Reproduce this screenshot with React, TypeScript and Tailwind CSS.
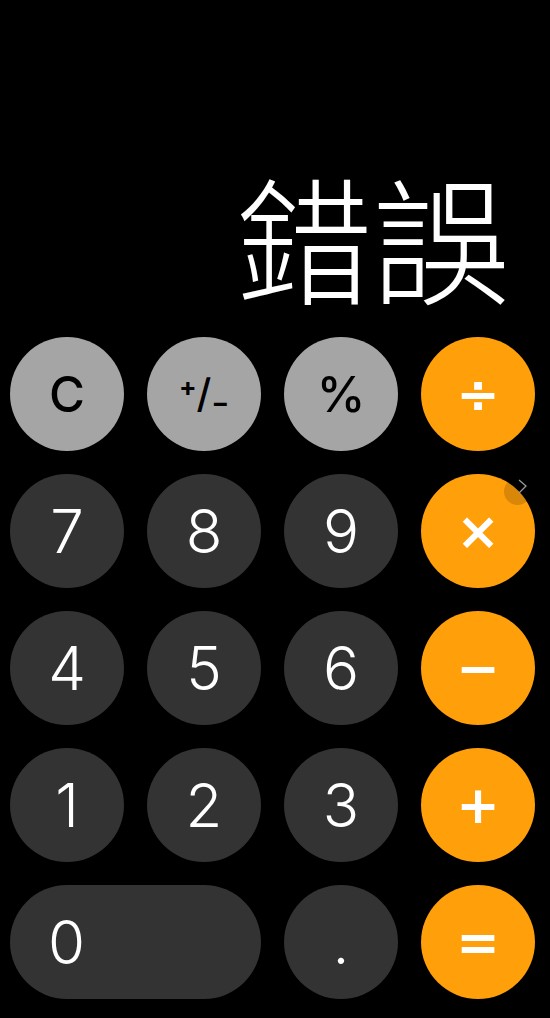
const digitFont = "font-['Inter','Liberation_Sans',sans-serif]";

type Kind = "fn" | "num" | "op";

const kindClass: Record<Kind, string> = {
  fn: "bg-[#a5a5a5] text-black",
  num: "bg-[#333333] text-white",
  op: "bg-[#ff9f0a] text-white",
};

function Key({
  kind,
  children,
  wide,
}: {
  kind: Kind;
  children: React.ReactNode;
  wide?: boolean;
}) {
  return (
    <div
      className={`${kindClass[kind]} ${
        wide ? "col-span-2 justify-start pl-[38px]" : "justify-center"
      } flex h-[114px] items-center rounded-full select-none`}
    >
      {children}
    </div>
  );
}

function Num({ v }: { v: string }) {
  return <span className={`${digitFont} text-[60px] font-light leading-none`}>{v}</span>;
}

function Fn({ v }: { v: string }) {
  return <span className={`${digitFont} text-[49px] font-medium leading-none`}>{v}</span>;
}

function Op({ v }: { v: string }) {
  return (
    <span className="font-['DejaVu_Sans',sans-serif] text-[52px] font-bold leading-none">
      {v}
    </span>
  );
}

function PlusMinus() {
  return (
    <span className={`${digitFont} flex items-center font-medium leading-none`}>
      <span className="mb-[15px] text-[26px] font-bold">+</span>
      <span className="text-[40px]">/</span>
      <span className="mt-[18px] text-[26px] font-bold">−</span>
    </span>
  );
}

export default function App() {
  return (
    <div className="relative flex h-[1018px] w-[550px] flex-col overflow-hidden bg-black">
      <div className="flex flex-1 items-end justify-end pb-[33px] pr-[40px]">
        <span className="font-['Noto_Sans_CJK_TC','Noto_Sans_CJK_SC',sans-serif] text-[137px] font-extralight leading-none text-white">
          錯誤
        </span>
      </div>

      <div className="grid grid-cols-[repeat(4,114px)] gap-[23px] pb-[19px] pl-[10px]">
        <Key kind="fn"><Fn v="C" /></Key>
        <Key kind="fn"><PlusMinus /></Key>
        <Key kind="fn"><Fn v="%" /></Key>
        <Key kind="op"><Op v="÷" /></Key>

        <Key kind="num"><Num v="7" /></Key>
        <Key kind="num"><Num v="8" /></Key>
        <Key kind="num"><Num v="9" /></Key>
        <Key kind="op"><Op v="×" /></Key>

        <Key kind="num"><Num v="4" /></Key>
        <Key kind="num"><Num v="5" /></Key>
        <Key kind="num"><Num v="6" /></Key>
        <Key kind="op"><Op v="−" /></Key>

        <Key kind="num"><Num v="1" /></Key>
        <Key kind="num"><Num v="2" /></Key>
        <Key kind="num"><Num v="3" /></Key>
        <Key kind="op"><Op v="+" /></Key>

        <Key kind="num" wide><Num v="0" /></Key>
        <Key kind="num"><Num v="." /></Key>
        <Key kind="op"><Op v="=" /></Key>
      </div>

      {/* floating handle */}
      <div className="absolute left-[504px] top-[478px] h-[27px] w-[27px] rounded-full bg-black/15" />
      <svg
        className="absolute left-[517px] top-[479px]"
        width="12"
        height="16"
        viewBox="0 0 12 16"
        fill="none"
        stroke="#9a9a9a"
        strokeWidth="1.3"
      >
        <polyline points="2,1 9,7 2,14" />
      </svg>
    </div>
  );
}
